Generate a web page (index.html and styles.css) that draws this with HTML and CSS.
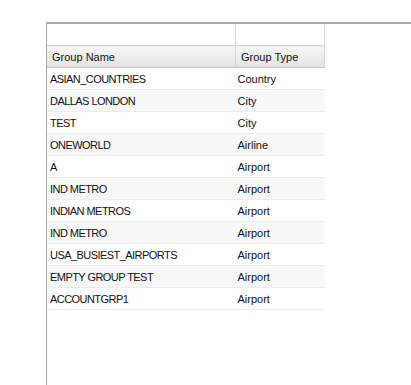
FILE: index.html
```html
<!DOCTYPE html>
<html lang="en">
<head>
    <meta charset="UTF-8">
    <link rel="stylesheet" href="styles.css">
</head>
<body>

    <div class="panel">
        <table class="grid">
            <thead>
                <tr class="filter-row">
                    <th class="col-name"></th>
                    <th class="col-type"></th>
                </tr>
                <tr class="head-row">
                    <th class="col-name">Group Name</th>
                    <th class="col-type">Group Type</th>
                </tr>
            </thead>
            <tbody>
                <tr><td class="name">ASIAN_COUNTRIES</td><td>Country</td></tr>
                <tr><td class="name">DALLAS LONDON</td><td>City</td></tr>
                <tr><td class="name">TEST</td><td>City</td></tr>
                <tr><td class="name">ONEWORLD</td><td>Airline</td></tr>
                <tr><td class="name">A</td><td>Airport</td></tr>
                <tr><td class="name">IND METRO</td><td>Airport</td></tr>
                <tr><td class="name">INDIAN METROS</td><td>Airport</td></tr>
                <tr><td class="name">IND METRO</td><td>Airport</td></tr>
                <tr><td class="name">USA_BUSIEST_AIRPORTS</td><td>Airport</td></tr>
                <tr><td class="name">EMPTY GROUP TEST</td><td>Airport</td></tr>
                <tr><td class="name">ACCOUNTGRP1</td><td>Airport</td></tr>
            </tbody>
        </table>
    </div>

</body>
</html>
```

FILE: styles.css
```css
html, body {
    height: 100%;
}

body {
    margin: 0;
    padding: 22px 0 0 0;
    box-sizing: border-box;
    font-family: "Liberation Sans", Arial, sans-serif;
    font-size: 11px;
    color: #111;
    background: #fff;
}

.panel {
    margin-left: 46px;
    height: 100%;
    border-top: 2px solid #a9a9ab;
    border-left: 1px solid #a9a9ab;
}

.grid {
    border-collapse: collapse;
    table-layout: fixed;
    width: 278px;
}

.grid .col-name {
    width: 183px;
}

.grid th {
    font-weight: normal;
    text-align: left;
    padding: 0 0 0 5px;
    border-right: 1px solid #d6d6e0;
    border-bottom: 1px solid #d6d6e0;
}

.filter-row th {
    height: 21px;
    background: #fff;
}

.head-row th {
    height: 21px;
    background: linear-gradient(#f7f7f7, #e3e3e3);
    border-bottom: 1px solid #c9c9d2;
}

.grid td {
    height: 21px;
    padding: 0 0 0 2px;
    border-bottom: 1px solid #ececec;
    white-space: nowrap;
}

.grid td.name {
    padding-left: 3px;
    letter-spacing: -0.55px;
}

.grid tbody tr:nth-child(even) td {
    background: #f8f8f8;
}
```
